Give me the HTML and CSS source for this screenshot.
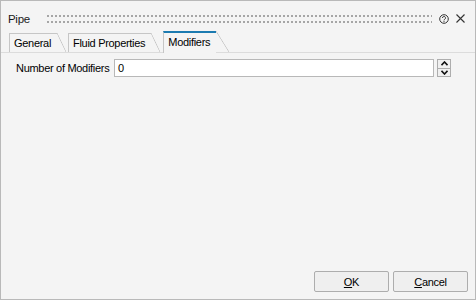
FILE: index.html
```html
<!DOCTYPE html>
<html lang="en">
<head>
    <meta charset="UTF-8">
    <meta name="viewport" content="width=device-width, initial-scale=1.0">
    <title>Pipe</title>
    <link rel="stylesheet" href="styles.css">
</head>
<body>
    <div class="window">
        <div class="titlebar">
            <span class="title">Pipe</span>
            <svg class="grip" height="8">
                <defs>
                    <pattern id="dots" width="4" height="6" patternUnits="userSpaceOnUse">
                        <rect x="0" y="0" width="2" height="2" fill="#a6a6a6"/>
                    </pattern>
                </defs>
                <rect width="100%" height="8" fill="url(#dots)"/>
            </svg>
            <svg class="help" width="10" height="10" viewBox="0 0 10 10">
                <circle cx="5" cy="5" r="4.3" fill="none" stroke="#333" stroke-width="1"/>
                <path d="M3.5 4 A1.5 1.5 0 1 1 5.8 5.2 C5.2 5.6 5 5.8 5 6.4" fill="none" stroke="#333" stroke-width="1"/>
                <circle cx="5" cy="7.6" r="0.6" fill="#333"/>
            </svg>
            <svg class="close" width="9" height="9" viewBox="0 0 9 9">
                <path d="M0.5 0.5 L8.5 8.5 M8.5 0.5 L0.5 8.5" stroke="#333" stroke-width="1.1"/>
            </svg>
        </div>

        <div class="tabs">
            <div class="tab">General</div>
            <div class="tab">Fluid Properties</div>
            <div class="tab active">Modifiers</div>
        </div>

        <div class="panel">
            <div class="field">
                <label class="field-label">Number of Modifiers</label>
                <div class="input">0</div>
                <div class="spin">
                    <button class="spin-btn">
                        <svg width="7" height="5" viewBox="0 0 7 5"><path d="M0.5 4.2 L3.5 1 L6.5 4.2" fill="none" stroke="#111" stroke-width="1.6"/></svg>
                    </button>
                    <button class="spin-btn">
                        <svg width="7" height="5" viewBox="0 0 7 5"><path d="M0.5 0.8 L3.5 4 L6.5 0.8" fill="none" stroke="#111" stroke-width="1.6"/></svg>
                    </button>
                </div>
            </div>
        </div>

        <div class="footer">
            <button class="btn"><u>O</u>K</button>
            <button class="btn"><u>C</u>ancel</button>
        </div>
    </div>
</body>
</html>
```

FILE: styles.css
```css
* {
    box-sizing: border-box;
}
html, body {
    margin: 0;
}
body {
    width: 476px;
    height: 300px;
    font-family: "Liberation Sans", Arial, sans-serif;
    font-size: 11px;
    letter-spacing: -0.3px;
    color: #000;
}
.window {
    height: 300px;
    border: 1px solid #b9b9b9;
    background: #f4f4f4;
    display: flex;
    flex-direction: column;
}
.titlebar {
    height: 30px;
    padding: 5px 10px 0 7px;
    display: flex;
    align-items: center;
}
.title {
    font-size: 11.5px;
    color: #1a1a1a;
}
.grip {
    flex: 1;
    min-width: 0;
    height: 8px;
    margin: 1px 7px 0 17px;
}
.help {
    margin-right: 7px;
}
.tabs {
    height: 22px;
    display: flex;
    align-items: flex-end;
    padding-left: 8px;
    border-bottom: 1px solid #dcdcdc;
}
.tab {
    position: relative;
    height: 19px;
    line-height: 18px;
    padding: 0 6px 0 4px;
    margin-right: 11px;
    border: 1px solid #c6c6c6;
    border-width: 1px 0 0 1px;
}
.tab::after {
    content: "";
    position: absolute;
    top: -1px;
    bottom: 0;
    left: 100%;
    width: 9px;
    background: linear-gradient(to top right, transparent calc(50% - 0.7px), #c6c6c6 50%, transparent calc(50% + 0.7px));
}
.tab.active {
    height: 22px;
    margin-bottom: -1px;
    margin-left: 1px;
    padding-bottom: 1px;
    border-top: 2px solid #1c7bb1;
    background: #f4f4f4;
    z-index: 1;
}
.tab.active::after {
    top: -2px;
    bottom: 1px;
    width: 13px;
    background: linear-gradient(to top right, #f4f4f4 calc(50% - 0.7px), #c6c6c6 50%, transparent calc(50% + 0.7px));
}
.panel {
    padding: 6px 0 0 15px;
}
.field {
    display: flex;
    align-items: center;
}
.field-label {
    width: 98px;
}
.input {
    width: 320px;
    height: 18px;
    line-height: 16px;
    padding-left: 3px;
    border: 1px solid #b8b8b8;
    background: #fff;
}
.spin {
    width: 14px;
    height: 18px;
    margin-left: 3px;
    display: flex;
    flex-direction: column;
}
.spin-btn {
    flex: 1;
    padding: 0;
    border: 1px solid #adadad;
    background: #f0f0f0;
    display: flex;
    align-items: center;
    justify-content: center;
}
.spin-btn + .spin-btn {
    border-top: none;
}
.footer {
    margin-top: auto;
    display: flex;
    justify-content: flex-end;
    gap: 4px;
    padding: 0 7px 7px 0;
}
.btn {
    width: 75px;
    height: 21px;
    padding: 0;
    border: 1px solid #adadad;
    border-radius: 2px;
    background: #efefef;
    font: inherit;
    letter-spacing: inherit;
    color: #000;
}
```
